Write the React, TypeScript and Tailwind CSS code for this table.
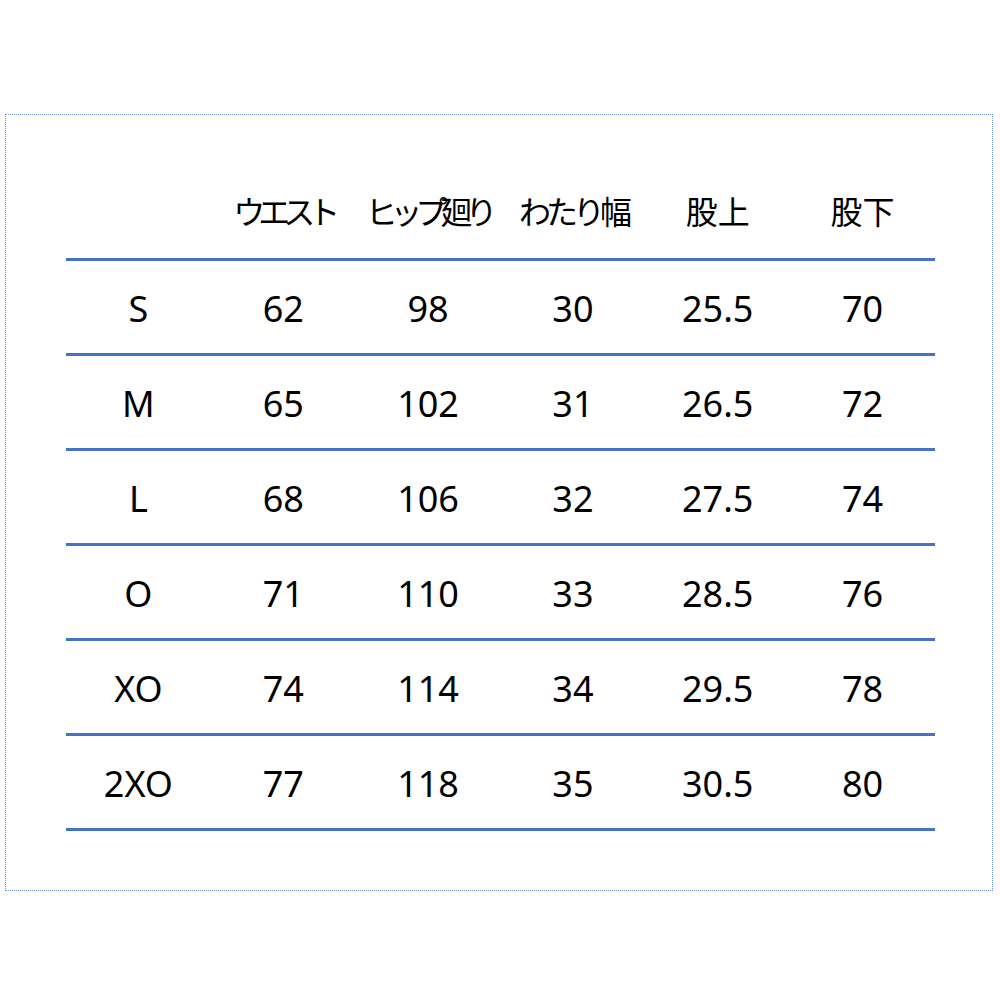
const headers = [
  { text: '', cls: '' },
  { text: 'ウエスト', cls: 'tracking-[-7px]' },
  { text: 'ヒップ廻り', cls: 'tracking-[-7px]' },
  { text: 'わたり幅', cls: 'tracking-[-5px]' },
  { text: '股上', cls: 'tracking-[0px]' },
  { text: '股下', cls: 'tracking-[0px]' },
];

const rows = [
  ['S', '62', '98', '30', '25.5', '70'],
  ['M', '65', '102', '31', '26.5', '72'],
  ['L', '68', '106', '32', '27.5', '74'],
  ['O', '71', '110', '33', '28.5', '76'],
  ['XO', '74', '114', '34', '29.5', '78'],
  ['2XO', '77', '118', '35', '30.5', '80'],
];

function App() {
  return (
    <div className="w-[1000px] h-[1000px] bg-white pt-[114px] pl-[5px]">
      <div
        className="w-[988px] h-[777px] border border-dotted border-[#6a8fd4] pt-[51px] pl-[60px]"
        style={{ fontFamily: '"Noto Sans", "Noto Sans CJK JP", sans-serif' }}
      >
        <div className="w-[869px]">
          <div className="grid grid-cols-6 h-[95px] border-b-[3px] border-[#4472c4] items-center text-center text-[32px] text-black">
            {headers.map((h, i) => (
              <div key={i} className={h.cls}>
                {h.text}
              </div>
            ))}
          </div>
          {rows.map((r, i) => (
            <div
              key={i}
              className="grid grid-cols-6 h-[95px] border-b-[3px] border-[#4472c4] items-center text-center text-[36px] text-black pt-[4px]"
            >
              {r.map((c, j) => (
                <div key={j}>{c}</div>
              ))}
            </div>
          ))}
        </div>
      </div>
    </div>
  );
}

export default App;
